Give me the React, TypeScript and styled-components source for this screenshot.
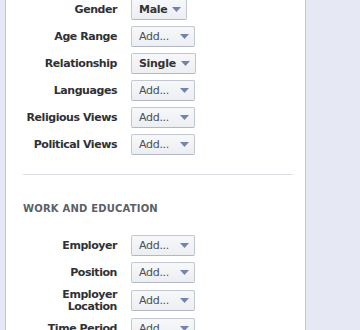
import React from "react";
import styled, { createGlobalStyle } from "styled-components";

const Global = createGlobalStyle`
  html, body { margin: 0; padding: 0; }
  body { background: #e6e9f3; font-family: "DejaVu Sans", "Liberation Sans", sans-serif; }
`;

const Page = styled.div`
  display: flex;
  height: 330px;
  overflow: hidden;
  background: #e6e9f3;
`;

const Gutter = styled.div`
  width: 5px;
  flex: none;
`;

const Main = styled.main`
  width: 301px;
  flex: none;
  box-sizing: border-box;
  background: #ffffff;
  border-left: 1px solid #b9c3da;
  border-right: 1px solid #c3c8d5;
  padding: 0 12px 0 17px;
`;

const Fields = styled.div<{ $top?: number }>`
  display: grid;
  grid-template-columns: 94px auto;
  column-gap: 14px;
  row-gap: 6px;
  align-items: center;
  justify-items: start;
  margin-top: ${(p) => p.$top ?? 0}px;
`;

const Label = styled.div`
  justify-self: end;
  text-align: right;
  font-size: 11px;
  line-height: 11.5px;
  font-weight: bold;
  color: #2f3136;
  letter-spacing: -0.45px;
`;

const Select = styled.button<{ $set?: boolean }>`
  display: flex;
  align-items: center;
  height: 21px;
  box-sizing: border-box;
  padding: 0 5px 0 7px;
  margin: 0;
  border: 1px solid #c2c7d1;
  border-bottom-color: #b2b8c4;
  border-radius: 2px;
  background: linear-gradient(#f7f8fa, #eceef2);
  font-family: "DejaVu Sans", "Liberation Sans", sans-serif;
  font-size: 11px;
  letter-spacing: -0.3px;
  font-weight: ${(p) => (p.$set ? "bold" : "normal")};
  color: ${(p) => (p.$set ? "#333333" : "#4b4f56")};
  cursor: pointer;
`;

const Arrow = styled.svg<{ $gap: number }>`
  margin-left: ${(p) => p.$gap}px;
  flex: none;
`;

const Divider = styled.hr`
  margin: 19px 0 0;
  border: 0;
  height: 1px;
  background: #dcdee3;
`;

const Heading = styled.h3`
  margin: 28px 0 0 0;
  font-size: 10px;
  line-height: 12px;
  font-weight: bold;
  color: #5b5f67;
  letter-spacing: 0.2px;
`;

type Field = { label: React.ReactNode; value?: string };

const basic: Field[] = [
  { label: "Gender", value: "Male" },
  { label: "Age Range" },
  { label: "Relationship", value: "Single" },
  { label: "Languages" },
  { label: "Religious Views" },
  { label: "Political Views" },
];

const work: Field[] = [
  { label: "Employer" },
  { label: "Position" },
  { label: <>Employer<br />Location</> },
  { label: "Time Period" },
];

function Dropdown({ value }: { value?: string }) {
  return (
    <Select $set={!!value}>
      <span>{value ?? "Add..."}</span>
      <Arrow $gap={value ? 5 : 11} width="9" height="5" viewBox="0 0 9 5">
        <path d="M0 0 H9 L4.5 5 Z" fill="#7084ad" />
      </Arrow>
    </Select>
  );
}

function FieldList({ items, top }: { items: Field[]; top?: number }) {
  return (
    <Fields $top={top}>
      {items.map((f, i) => (
        <React.Fragment key={i}>
          <Label>{f.label}</Label>
          <Dropdown value={f.value} />
        </React.Fragment>
      ))}
    </Fields>
  );
}

export default function App() {
  return (
    <>
      <Global />
      <Page>
        <Gutter />
        <Main>
          <FieldList items={basic} top={-1} />
          <Divider />
          <Heading>WORK AND EDUCATION</Heading>
          <FieldList items={work} top={20} />
        </Main>
      </Page>
    </>
  );
}
